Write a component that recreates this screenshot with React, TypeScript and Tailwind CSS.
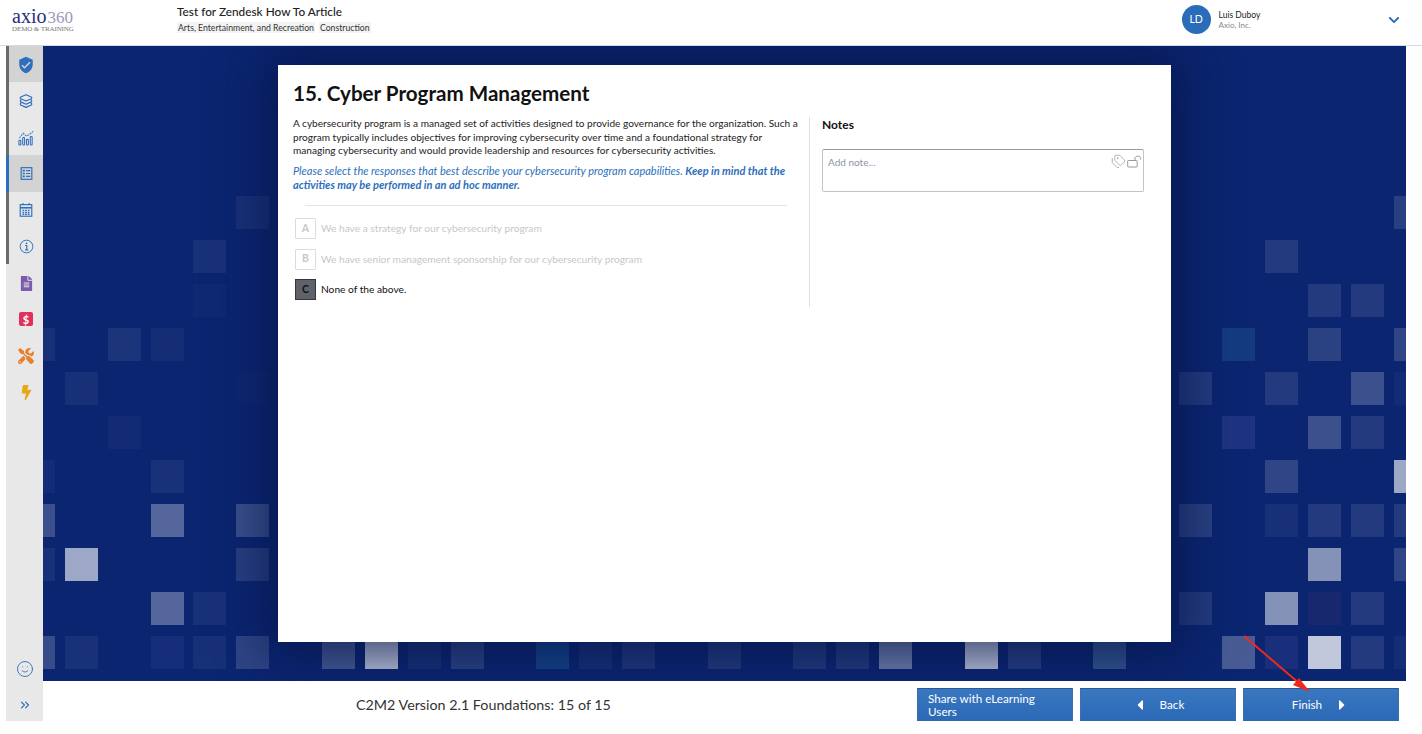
import React from "react";
import { FaBolt, FaCaretLeft, FaCaretRight, FaChevronDown, FaFileAlt, FaTools } from "react-icons/fa";
import { MdVerifiedUser } from "react-icons/md";
import { ChevronsRight, Smile, Tags } from "lucide-react";

const BLUE = "#2e6fbd";

const LayersIcon = () => (
  <svg width="16" height="16" viewBox="0 0 18 18" fill="none" stroke={BLUE} strokeWidth="1.3" strokeLinejoin="round">
    <path d="M9 2 L15 4.6 Q16 5.5 15 6.4 L9 9 L3 6.4 Q2 5.5 3 4.6 Z" />
    <path d="M4 7.2 L3 7.8 Q2 9 3 10 L9 12.6 L15 10 Q16 9 15 7.8 L14 7.2" />
    <path d="M4 10.8 L3 11.4 Q2 12.6 3 13.6 L9 16.2 L15 13.6 Q16 12.6 15 11.4 L14 10.8" />
  </svg>
);
const ChartIcon = () => (
  <svg width="17" height="17" viewBox="0 0 18 18" fill="none" stroke={BLUE} strokeWidth="1.1">
    <path d="M1.5 9.5 L5.5 4.5 L9 7.5 L12.5 5.5 L16 2.5" strokeDasharray="2 1" />
    <rect x="1" y="12" width="2" height="5" rx=".8" />
    <rect x="5" y="9" width="2" height="8" rx=".8" />
    <rect x="9" y="11" width="2" height="6" rx=".8" />
    <rect x="13" y="8" width="2" height="9" rx=".8" />
  </svg>
);
const FormIcon = () => (
  <svg width="15" height="15" viewBox="0 0 18 18" fill="none" stroke={BLUE} strokeWidth="1.4">
    <rect x="2.6" y="2" width="12.8" height="14" />
    <path d="M8.5 5.5H13.5M8.5 9H13.5M8.5 12.5H13.5" />
    <path d="M4.5 5.5H7M4.5 9H7M4.5 12.5H7" strokeWidth="2" />
  </svg>
);
const CalendarIcon = () => (
  <svg width="16" height="16" viewBox="0 0 18 18" fill="none" stroke={BLUE} strokeWidth="1.3">
    <rect x="2.5" y="3" width="13" height="13" />
    <path d="M2.5 6.5H15.5" strokeWidth="1.8" />
    <path d="M5.5 1V3.5M12.5 1V3.5" />
    <path d="M5 9.4H13M5 11.6H13M5 13.8H13" strokeWidth="1.5" strokeDasharray="2 1" />
  </svg>
);
const InfoIcon = () => (
  <svg width="17" height="17" viewBox="0 0 18 18" fill="none" stroke={BLUE} strokeWidth="1">
    <circle cx="9" cy="9" r="6.7" />
    <path d="M7.6 8H9.3V12.4M7.5 12.6H10.8" strokeWidth="1.2" />
    <circle cx="9" cy="5.6" r=".9" fill={BLUE} stroke="none" />
  </svg>
);
const OpenLock = () => (
  <svg width="15" height="13" viewBox="0 0 15 13" fill="none" stroke="#9a9a9a" strokeWidth="1">
    <rect x="0.7" y="5.5" width="9.5" height="6.5" rx="0.6" />
    <path d="M8 5.5V3.2C8 0.4 13.6 0.4 13.6 3.2V4.5" />
  </svg>
);

const DollarIcon = () => (
  <span className="flex h-[14px] w-[14px] items-center justify-center rounded-[2px] bg-[#e0305c] text-[11px] leading-none font-bold text-white">$</span>
);

const topItems: { icon: React.ReactNode; active?: boolean }[] = [
  { icon: <MdVerifiedUser size={18} color={BLUE} />, active: true },
  { icon: <LayersIcon /> },
  { icon: <ChartIcon /> },
  { icon: <FormIcon />, active: true },
  { icon: <CalendarIcon /> },
  { icon: <InfoIcon /> },
  { icon: <FaFileAlt size={15} color="#7a5cab" /> },
  { icon: <DollarIcon /> },
  { icon: <FaTools size={16} color="#e5822b" /> },
  { icon: <FaBolt size={15} color="#e6a713" /> },
];

// row → [column, white alpha] ; string values are solid colours
const rows: [number, number | string][][] = [
  [[4, 0.06], [31, 0.12]],
  [[3, 0.06], [28, 0.1]],
  [[3, 0.02], [29, 0.1], [30, 0.1]],
  [[-1, 0.05], [1, 0.07], [2, 0.04], [27, "#143a80"], [29, 0.13], [31, 0.15]],
  [[0, 0.05], [4, 0.01], [26, 0.1], [28, 0.1], [30, 0.2], [31, 0.03]],
  [[1, 0.03], [27, "#1e3480"], [29, 0.2], [30, 0.1]],
  [[-1, "#142b78"], [2, 0.06], [28, 0.15], [31, 0.6]],
  [[-1, 0.2], [2, 0.3], [4, 0.2], [26, 0.13], [28, 0.05], [29, 0.1], [30, 0.1], [31, 0.1]],
  [[-1, 0.06], [0, 0.6], [4, 0.12], [29, 0.5], [31, 0.15]],
  [[0, 0.005], [2, 0.3], [3, 0.06], [26, 0.1], [28, 0.5], [29, "#17286f"], [30, 0.1]],
  [[-1, 0.18], [0, 0.06], [2, "#162d7a"], [3, 0.05], [4, 0.15], [6, 0.25], [7, 0.72], [8, 0.05], [9, 0.14], [11, "#14448a"], [12, 0.05], [13, 0.09], [15, 0.1], [17, 0.1], [18, 0.1], [19, 0.42], [21, 0.72], [22, 0.12], [24, "#34558f"], [27, 0.25], [28, "#1a2f7c"], [29, 0.75], [30, 0.1], [31, 0.04]],
];

const cells: { key: string; col: number; row: number; value: number | string }[] = rows.flatMap((r, ri) =>
  r.map(([c, v]) => ({ key: `${ri}-${c}`, col: c + 2, row: ri + 1, value: v }))
);

const Option = ({ letter, text, selected }: { letter: string; text: string; selected?: boolean }) => (
  <div className="flex h-[30.5px] items-center gap-[5px] pl-[2px]">
    {selected ? (
      <span className="flex h-[21px] w-[21px] items-center justify-center border border-[#33363c] bg-[#5f626a] text-[10.5px] font-bold text-[#111]">{letter}</span>
    ) : (
      <span className="flex h-[21px] w-[21px] items-center justify-center rounded-[1px] border border-[#dcdcdc] text-[10.5px] font-bold text-[#c8c8c8]">{letter}</span>
    )}
    <span className={selected ? "text-[10.2px] text-[#111]" : "text-[10.2px] text-[#c8c8c8]"}>{text}</span>
  </div>
);

const btn =
  "flex h-[33px] w-[156px] items-center border-x border-t border-x-[#3f6ea8] border-t-[#2a5a96] bg-gradient-to-b from-[#3a77c0] to-[#2b69b6] text-[11.7px] text-white";

export default function App() {
  return (
    <div className="relative h-[734px] w-[1422px] overflow-hidden bg-white font-['Lato','Noto_Sans',sans-serif]">
      <header className="flex h-[46px] items-center border-b border-[#d5dbe6]">
        <div className="ml-[12px] flex w-[165px] flex-col pb-[3px]">
          <div className="flex items-baseline font-['Liberation_Serif',serif] leading-none">
            <span className="text-[20px] leading-[15px] text-[#2c2d7d]">axio</span>
            <span className="ml-[1px] text-[17px] leading-[15px] font-light text-[#9a9ab5]">360</span>
          </div>
          <span className="font-['Liberation_Serif',serif] text-[7px] leading-[8px] tracking-[-0.1px] text-[#777]">DEMO &amp; TRAINING</span>
        </div>
        <div className="flex flex-col pb-[8px]">
          <span className="text-[11.8px] leading-[15px] font-medium text-[#222]">Test for Zendesk How To Article</span>
          <div className="mt-[3px] flex gap-[4px]">
            <span className="bg-[#f3f3f3] px-[1px] text-[8.7px] leading-[11px] text-[#333]">Arts, Entertainment, and Recreation</span>
            <span className="bg-[#f3f3f3] px-[1px] text-[8.7px] leading-[11px] text-[#333]">Construction</span>
          </div>
        </div>
        <div className="ml-[811px] flex items-center pb-[6px]">
          <span className="flex h-[29px] w-[29px] items-center justify-center rounded-full bg-[#2b6cb8] text-[10.5px] text-white">LD</span>
          <div className="ml-[8px] flex w-[168px] flex-col">
            <span className="text-[8.5px] leading-[10px] text-[#222]">Luis Duboy</span>
            <span className="text-[8px] leading-[10px] text-[#888]">Axio, Inc.</span>
          </div>
          <FaChevronDown size={12} color={BLUE} className="ml-[1px]" />
        </div>
      </header>

      <div className="flex pr-[16px] pl-[6px]">
        <aside className="flex h-[675px] w-[37px] flex-col justify-between bg-[#e8e8e8] shadow-[1px_0_1px_rgba(0,0,0,0.06)]">
          <div className="flex flex-col">
            {topItems.map((item, i) => (
              <div
                key={i}
                className={
                  "flex h-[36.4px] items-center justify-center border-l-[3px] pt-[1px] " +
                  (item.active ? "bg-[#d3d3d3] " : "") +
                  (i === 3 ? "border-[#2e6fbd]" : i < 6 ? "border-[#6b6b6b]" : "border-transparent")
                }
              >
                {item.icon}
              </div>
            ))}
          </div>
          <div className="flex flex-col">
            <div className="mb-[2px] flex h-[36px] items-center justify-center">
              <Smile size={18} color={BLUE} strokeWidth={1.2} />
            </div>
            <div className="flex h-[32px] items-center justify-center">
              <ChevronsRight size={14} color={BLUE} strokeWidth={2} />
            </div>
          </div>
        </aside>

        <div className="flex w-[1363px] flex-col">
          <main className="relative h-[635px] overflow-hidden bg-[#0b2570]">
            <div className="absolute top-[150px] left-[-21px] grid grid-cols-[repeat(33,33px)] grid-rows-[repeat(11,33px)] gap-x-[9.87px] gap-y-[11px]">
              {cells.map((c) => (
                <div
                  key={c.key}
                  style={{
                    gridColumnStart: c.col,
                    gridRowStart: c.row,
                    background: typeof c.value === "string" ? c.value : `rgba(255,255,255,${c.value})`,
                  }}
                />
              ))}
            </div>
            <section className="relative mt-[19px] ml-[235px] flex h-[577px] w-[893px] bg-white pt-[15px] pl-[15px] shadow-[0_0_45px_12px_rgba(6,22,72,0.75)]">
              <div className="w-[516px]">
                <h1 className="text-[20.6px] leading-[26px] font-bold text-[#111]">15. Cyber Program Management</h1>
                <p className="mt-[11px] w-[510px] text-[10.1px] leading-[13.5px] text-[#222]">
                  A cybersecurity program is a managed set of activities designed to provide governance for the organization. Such a program typically includes objectives for improving cybersecurity over time and a foundational strategy for managing cybersecurity and would provide leadership and resources for cybersecurity activities.
                </p>
                <p className="mt-[6px] w-[506px] text-[11px] leading-[14px] text-[#2e6fbd] italic">
                  Please select the responses that best describe your cybersecurity program capabilities. <b>Keep in mind that the activities may be performed in an ad hoc manner.</b>
                </p>
                <div className="mt-[13px] ml-[12px] h-px w-[482px] bg-[#e3e3e3]" />
                <div className="mt-[8px]">
                  <Option letter="A" text="We have a strategy for our cybersecurity program" />
                  <Option letter="B" text="We have senior management sponsorship for our cybersecurity program" />
                  <Option letter="C" text="None of the above." selected />
                </div>
              </div>
              <div className="mt-[37px] h-[190px] border-l border-[#e0e0e0] pl-[12px]">
                <h2 className="text-[12px] leading-[15px] font-bold text-[#111]">Notes</h2>
                <div className="relative mt-[17px] h-[43px] w-[322px] rounded-[2px] border border-t-[#999] border-r-[#c4c4c4] border-b-[#c4c4c4] border-l-[#c4c4c4] bg-white px-[5px] py-[5px] text-[10px] text-[#8c93a3]">
                  Add note...
                  <div className="absolute top-[4px] right-[1px] flex items-center gap-[1px]">
                    <Tags size={15} color="#9a9a9a" strokeWidth={1.2} />
                    <OpenLock />
                  </div>
                </div>
              </div>
            </section>
          </main>
          <footer className="flex h-[40px] items-start bg-white pt-[7px]">
            <span className="mt-[8px] ml-[313px] w-[561px] text-[14.3px] leading-[18px] text-[#333]">C2M2 Version 2.1 Foundations: 15 of 15</span>
            <div className="flex gap-[7px]">
              <button className={btn + " px-[10px] text-left leading-[13px]"}>Share with eLearning Users</button>
              <button className={btn + " justify-center gap-[12px]"}>
                <FaCaretLeft size={16} />
                Back
              </button>
              <button className={btn + " justify-center gap-[12px]"}>
                Finish
                <FaCaretRight size={16} />
              </button>
            </div>
          </footer>
        </div>
      </div>

      <svg className="pointer-events-none absolute top-[634px] left-[1242px]" width="72" height="62" viewBox="0 0 72 62" fill="none">
        <path d="M2 2 L58 50" stroke="#ee2a1c" strokeWidth="2" />
        <path d="M68 58 L51 51 L57 44 Z" fill="#ee2a1c" />
      </svg>
    </div>
  );
}
